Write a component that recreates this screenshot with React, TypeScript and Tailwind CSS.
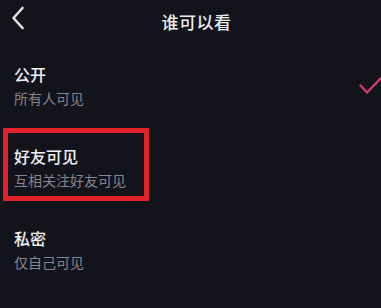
const options = [
  { title: '公开', desc: '所有人可见', checked: true },
  { title: '好友可见', desc: '互相关注好友可见', highlight: true },
  { title: '私密', desc: '仅自己可见' },
];

export default function App() {
  return (
    <div
      className="w-[381px] h-[308px] overflow-hidden bg-[#13131c] text-[#ececee]"
      style={{ fontFamily: '"Noto Sans CJK SC", "Noto Sans", sans-serif' }}
    >
      {/* header */}
      <div className="relative h-[42px] flex items-center justify-center">
        <svg width="16" height="26" viewBox="0 0 16 26" className="absolute left-[10px] top-[5px]" fill="none">
          <path d="M12.5 3 L3.5 13 L12.5 23" stroke="#e2e2e6" strokeWidth="2.6" strokeLinecap="round" strokeLinejoin="round" />
        </svg>
        <h1 className="pl-[12px] text-[17px] leading-none font-medium tracking-[0.5px]">谁可以看</h1>
      </div>

      {options.map((o) => (
        <div key={o.title} className="relative h-[82px] flex items-center justify-between pl-[14px]">
          <div className="flex flex-col gap-[4px] pt-[6px]">
            <span className="text-[16px] leading-[20px] font-medium text-[#f0f0f2]">{o.title}</span>
            <span className="text-[14px] leading-[20px] text-[#85858d]">{o.desc}</span>
          </div>
          {o.checked && (
            <svg width="22" height="18" viewBox="0 0 22 18" className="mt-[6px]" fill="none">
              <path d="M1.5 8.5 L8 15.5 L22 1" stroke="#d33a66" strokeWidth="2.4" strokeLinecap="round" strokeLinejoin="round" />
            </svg>
          )}
          {o.highlight && (
            <div className="absolute left-[3px] top-[4px] w-[146px] h-[73px] border-[5px] border-[#e3212b] rounded-[1px]" />
          )}
        </div>
      ))}
    </div>
  );
}
